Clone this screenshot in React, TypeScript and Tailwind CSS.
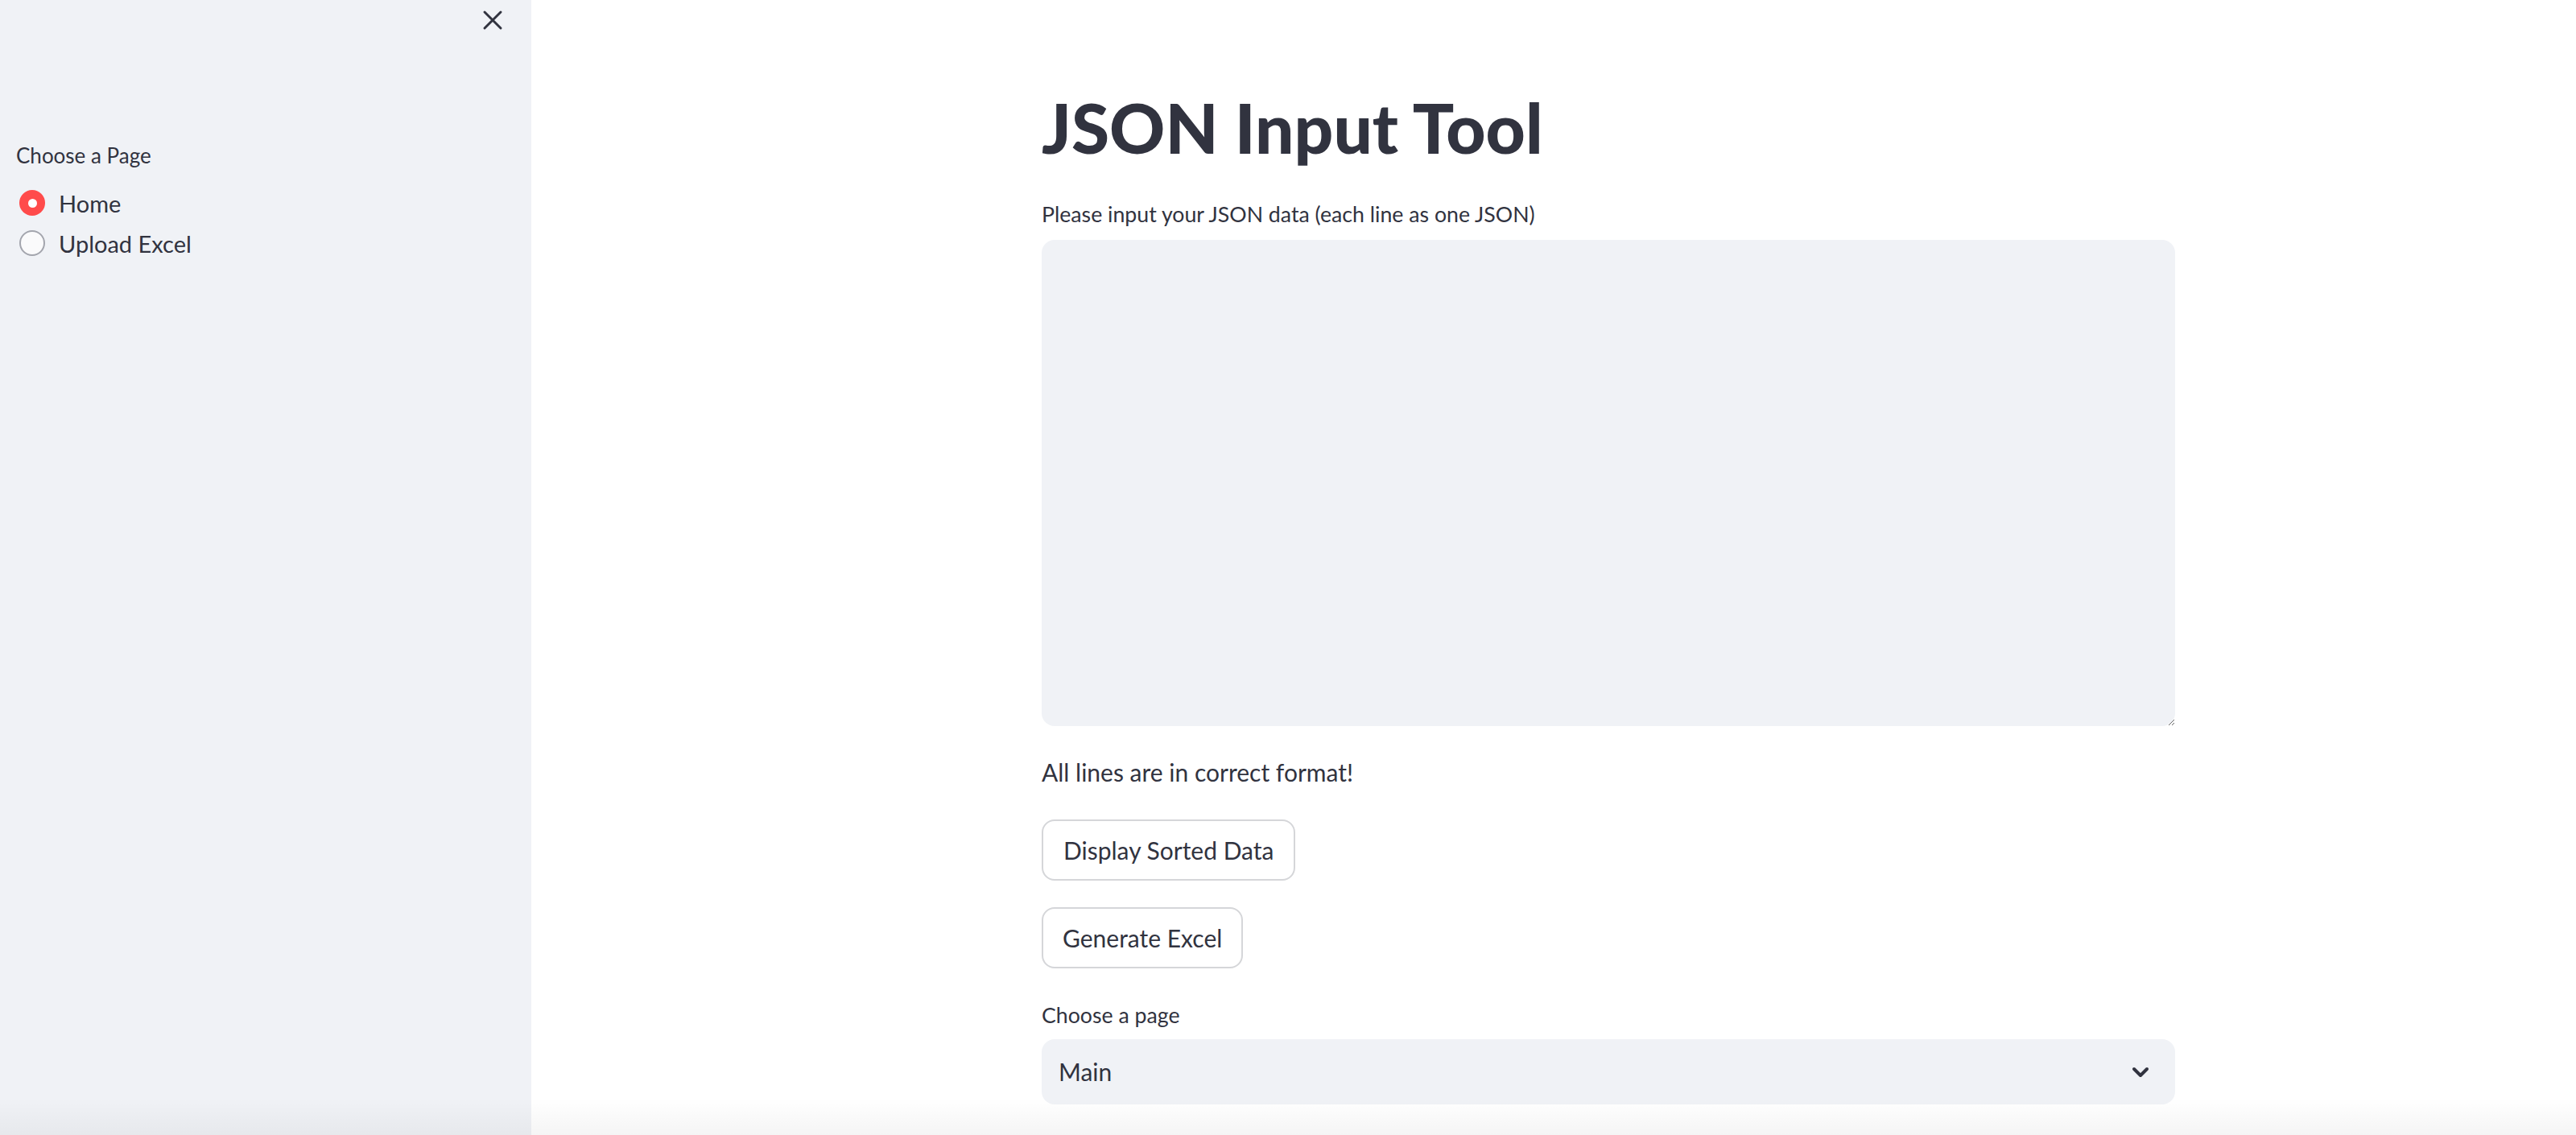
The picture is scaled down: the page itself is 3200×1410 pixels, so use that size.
import { useState } from "react";

const font = "font-['Lato','Noto_Sans',sans-serif]";

const pages = ["Home", "Upload Excel"];

const App = () => {
  const [page, setPage] = useState("Home");
  const [text, setText] = useState("");

  return (
    <div className={`relative flex h-screen w-full overflow-hidden bg-white text-[#31333f] ${font}`}>
      {/* Sidebar */}
      <aside className="flex w-[660px] shrink-0 flex-col bg-[#f0f2f6]">
        <div className="flex h-[50px] items-center justify-end pr-[35px]">
          <button className="flex h-[26px] w-[26px] items-center justify-center">
            <svg width="26" height="26" viewBox="0 0 26 26" fill="none" stroke="#31333f" strokeWidth="3" strokeLinecap="round">
              <path d="M3 3 23 23M23 3 3 23" />
            </svg>
          </button>
        </div>
        <div className="mt-[129px] pl-[20px] text-[26px] leading-[28px]">Choose a Page</div>
        <div className="mt-[20px] flex flex-col pl-[24px]">
          {pages.map((p) => (
            <label key={p} onClick={() => setPage(p)} className="flex h-[50px] cursor-pointer items-center gap-[17px]">
              {page === p ? (
                <span className="flex h-[32px] w-[32px] items-center justify-center rounded-full bg-[#ff4b4b]">
                  <span className="h-[11px] w-[11px] rounded-full bg-white" />
                </span>
              ) : (
                <span className="h-[32px] w-[32px] rounded-full border-2 border-[#a3a5ad] bg-[#fafafb]" />
              )}
              <span className="text-[29px] leading-[29px]">{p}</span>
            </label>
          ))}
        </div>
      </aside>

      {/* Main */}
      <main className="flex-1 pl-[634px]">
        <div className="flex w-[1408px] flex-col">
          <h1 className="mt-[108px] h-[100px] text-[85.5px] font-black leading-[100px]">JSON Input Tool</h1>

          <div className="mt-[44px] text-[26.7px] leading-[28px]">Please input your JSON data (each line as one JSON)</div>
          <textarea
            value={text}
            onChange={(e) => setText(e.target.value)}
            className="mt-[18px] h-[604px] w-full resize-y rounded-[16px] bg-[#f0f2f6] p-[20px] text-[30px] outline-none"
          />

          <div className="mt-[42px] text-[30px] leading-[30px]">All lines are in correct format!</div>

          <div className="mt-[44px]">
            <button className="h-[76px] rounded-[16px] border-2 border-[#d5d6d9] bg-white px-[25px] text-[30px]">
              Display Sorted Data
            </button>
          </div>
          <div className="mt-[33px]">
            <button className="h-[76px] rounded-[16px] border-2 border-[#d5d6d9] bg-white px-[24px] text-[30px]">
              Generate Excel
            </button>
          </div>

          <div className="mt-[44px] text-[26.7px] leading-[28px]">Choose a page</div>
          <div className="mt-[16px] flex h-[81px] w-full items-center justify-between rounded-[16px] bg-[#f0f2f6] pl-[21px] pr-[32px]">
            <span className="text-[30px]">Main</span>
            <svg width="22" height="14" viewBox="0 0 22 14" fill="none" stroke="#31333f" strokeWidth="4" strokeLinecap="round" strokeLinejoin="round">
              <path d="M3 3 11 11 19 3" />
            </svg>
          </div>
        </div>
      </main>

      {/* bottom fade */}
      <div className="pointer-events-none absolute bottom-0 left-0 right-0 h-[46px] bg-gradient-to-b from-transparent to-black/[0.04]" />
    </div>
  );
};

export default App;
